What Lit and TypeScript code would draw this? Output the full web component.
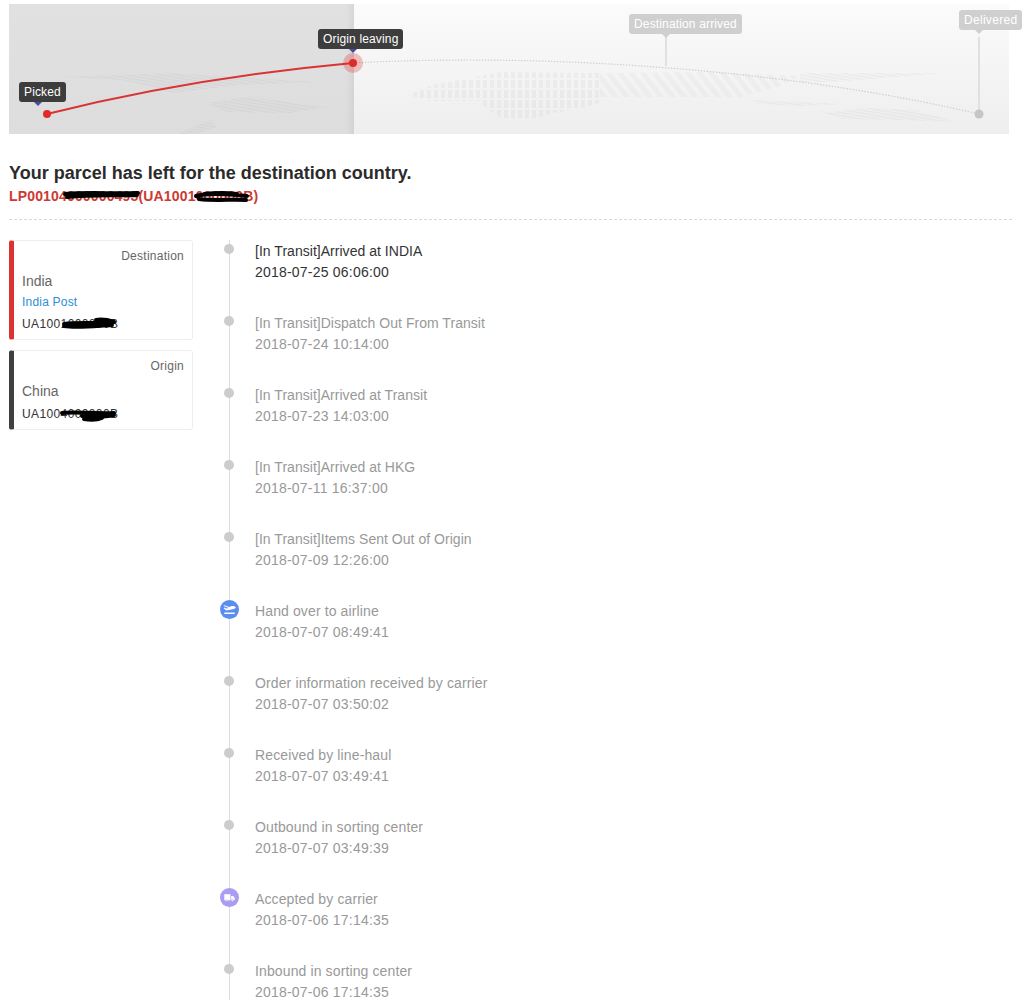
import { LitElement, html, css, svg } from "lit";
import { customElement } from "lit/decorators.js";

type Kind = "dot" | "plane" | "truck";
interface Track {
  text: string;
  time: string;
  kind?: Kind;
}

const TRACKS: Track[] = [
  { text: "[In Transit]Arrived at INDIA", time: "2018-07-25 06:06:00" },
  { text: "[In Transit]Dispatch Out From Transit", time: "2018-07-24 10:14:00" },
  { text: "[In Transit]Arrived at Transit", time: "2018-07-23 14:03:00" },
  { text: "[In Transit]Arrived at HKG", time: "2018-07-11 16:37:00" },
  { text: "[In Transit]Items Sent Out of Origin", time: "2018-07-09 12:26:00" },
  { text: "Hand over to airline", time: "2018-07-07 08:49:41", kind: "plane" },
  { text: "Order information received by carrier", time: "2018-07-07 03:50:02" },
  { text: "Received by line-haul", time: "2018-07-07 03:49:41" },
  { text: "Outbound in sorting center", time: "2018-07-07 03:49:39" },
  { text: "Accepted by carrier", time: "2018-07-06 17:14:35", kind: "truck" },
  { text: "Inbound in sorting center", time: "2018-07-06 17:14:35" },
];

// world map patches, in page coordinates (the group is shifted by the map offset)
const LAND: [string, string][] = [
  ["M60 77L173 73L317 82L240 85L173 93L123 80Z", "thin"],
  ["M207 103L247 97L327 107L290 113L227 112Z", "thin"],
  ["M180 133L210 120L217 127L197 134H180Z", "thin"],
  ["M408 95L433 85L477 77L500 72L600 73V103L573 110L553 113L533 119H503L488 110L480 101H430Z", "grid"],
  ["M600 73L720 72L800 76L780 86L740 97H683L600 97Z", "slant"],
  ["M800 73L947 73L883 78L833 82H800Z", "thin"],
  ["M823 113L867 108L913 110L957 122L900 120L843 119Z", "thin"],
  ["M745 100L800 102L843 104L800 106L760 104Z", "thin"],
];

@customElement("map-strip")
class MapStrip extends LitElement {
  static styles = css`
    :host {
      display: block;
      position: relative;
      width: 1000px;
      height: 130px;
      background: linear-gradient(#fbfbfb, #eeeeee);
    }
    svg {
      display: block;
    }
    .tag {
      position: absolute;
      height: 20px;
      line-height: 20px;
      padding: 0 5px;
      border-radius: 3px;
      font-size: 12px;
      letter-spacing: 0.15px;
      white-space: nowrap;
      color: #fff;
      background: #3d3d3d;
    }
    .tag::after {
      content: "";
      position: absolute;
      top: 100%;
      border: 4px solid transparent;
      border-bottom-width: 0;
      border-top-color: #4b4ba0;
    }
    .tag.off {
      background: #cfcfcf;
    }
    .tag.off::after {
      border-top-color: #cfcfcf;
    }
    .picked {
      left: 10px;
      top: 78px;
    }
    .picked::after {
      left: 15px;
    }
    .leaving {
      left: 309px;
      top: 25px;
    }
    .leaving::after {
      left: 31px;
    }
    .arrived {
      left: 620px;
      top: 10px;
    }
    .arrived::after {
      left: 33px;
    }
    .delivered {
      left: 950px;
      top: 6px;
      letter-spacing: 0.3px;
    }
    .delivered::after {
      left: 16px;
    }
  `;

  render() {
    return html`
      <svg width="1000" height="130" viewBox="0 0 1000 130">
        <defs>
          <pattern id="thin" width="3" height="3" patternUnits="userSpaceOnUse" patternTransform="rotate(10)">
            <rect width="3" height="1.5" fill="#000" fill-opacity="0.04"></rect>
          </pattern>
          <pattern id="slant" width="9" height="9" patternUnits="userSpaceOnUse" patternTransform="rotate(-38)">
            <rect width="5" height="9" fill="#000" fill-opacity="0.025"></rect>
          </pattern>
          <pattern id="grid" width="7" height="10" patternUnits="userSpaceOnUse">
            <rect width="4" height="8" fill="#000" fill-opacity="0.03"></rect>
          </pattern>
          <linearGradient id="done" x1="0" x2="0" y1="0" y2="1">
            <stop offset="0" stop-color="#e1e1e1"></stop>
            <stop offset="1" stop-color="#dddddd"></stop>
          </linearGradient>
          <linearGradient id="edge" x1="0" x2="1" y1="0" y2="0">
            <stop offset="0" stop-color="#000" stop-opacity="0"></stop>
            <stop offset="1" stop-color="#000" stop-opacity="0.05"></stop>
          </linearGradient>
          <filter id="soft"><feGaussianBlur stdDeviation="0.7"></feGaussianBlur></filter>
        </defs>
        <rect x="0" y="0" width="345" height="130" fill="url(#done)"></rect>
        <rect x="337" y="0" width="8" height="130" fill="url(#edge)"></rect>
        <g transform="translate(-9 -4)" filter="url(#soft)">
          ${LAND.map(([d, p]) => svg`<path d=${d} fill="url(#${p})"></path>`)}
        </g>
        <path d="M657 31V62" stroke="#e0e0e0" stroke-width="2"></path>
        <path d="M970 33V110" stroke="#e0e0e0" stroke-width="2"></path>
        <path d="M344 59C551 48 791 68 970 110" fill="none" stroke="#cfcfcf" stroke-width="1.2" stroke-dasharray="1.5 1.5"></path>
        <circle cx="970" cy="110" r="4.5" fill="#c6c6c6"></circle>
        <path d="M38 110Q181 74 344 59" fill="none" stroke="#d93434" stroke-width="2"></path>
        <circle cx="38" cy="110" r="4" fill="#e02a2a"></circle>
        <circle cx="344" cy="59" r="10" fill="#e02a2a" fill-opacity="0.28"></circle>
        <circle cx="344" cy="59" r="4" fill="#e02a2a"></circle>
      </svg>
      <div class="tag picked">Picked</div>
      <div class="tag leaving">Origin leaving</div>
      <div class="tag off arrived">Destination arrived</div>
      <div class="tag off delivered">Delivered</div>
    `;
  }
}

@customElement("app-root")
class AppRoot extends LitElement {
  static styles = css`
    :host {
      display: block;
      height: 1000px;
      overflow: hidden;
      padding: 4px 0 0 9px;
      box-sizing: border-box;
      font-family: "Liberation Sans", Arial, sans-serif;
      background: #fff;
    }
    h1 {
      margin: 28px 0 0;
      font-size: 18px;
      line-height: 22px;
      font-weight: bold;
      color: #2b2b2b;
    }
    .code {
      margin-top: 2px;
      width: fit-content;
      position: relative;
      font-size: 14px;
      line-height: 20px;
      font-weight: bold;
      letter-spacing: 0.16px;
      color: #cc3a32;
    }
    .sep {
      margin-top: 13px;
      width: 1003px;
      border-top: 1px dashed #d8d8d8;
    }
    .body {
      display: flex;
      margin-top: 20px;
    }
    .cards {
      width: 184px;
      display: flex;
      flex-direction: column;
      gap: 10px;
    }
    .card {
      box-sizing: border-box;
      padding: 7px 8px 0 8px;
      border: 1px solid #eee;
      border-left: 5px solid #3f3f3f;
      border-radius: 3px;
      height: 80px;
    }
    .card.now {
      height: 100px;
      border-left-color: #dc3232;
    }
    .label {
      text-align: right;
      font-size: 12px;
      line-height: 16px;
      letter-spacing: 0.25px;
      color: #666;
    }
    .place {
      margin-top: 7px;
      font-size: 14px;
      line-height: 20px;
      color: #666;
    }
    .carrier {
      margin-top: 3px;
      font-size: 12px;
      line-height: 16px;
      letter-spacing: 0.2px;
      color: #2a8fd6;
    }
    .num {
      margin-top: 5px;
      font-size: 12px;
      line-height: 18px;
      letter-spacing: 0.38px;
      color: #333;
      position: relative;
      width: fit-content;
    }
    .place + .num {
      margin-top: 4px;
    }
    .ink {
      position: absolute;
      left: 0;
      top: 0;
      overflow: visible;
    }
    .timeline {
      margin-left: 26px;
    }
    .row {
      display: flex;
      height: 72px;
    }
    .mark {
      position: relative;
      width: 20px;
      margin-right: 16px;
      flex: none;
    }
    .mark::before {
      content: "";
      position: absolute;
      left: 9.5px;
      top: 0;
      bottom: 0;
      width: 1px;
      background: #ddd;
    }
    .dot {
      position: absolute;
      left: 5px;
      top: 4px;
      width: 10px;
      height: 10px;
      border-radius: 50%;
      background: #ccc;
    }
    .icon {
      position: absolute;
      left: 1px;
      top: 0;
    }
    .info {
      padding-top: 1px;
      font-size: 14px;
      line-height: 21px;
      letter-spacing: 0.12px;
      color: #999;
    }
    .transit {
      letter-spacing: 0.03px;
    }
    .time {
      letter-spacing: 0.21px;
    }
    .row.latest .info {
      color: #333;
    }
  `;

  private scribble(d: string) {
    return html`<svg class="ink" width="10" height="10"><path d=${d} fill="none" stroke="#000" stroke-width="4" stroke-linecap="round"></path></svg>`;
  }

  private marker(kind?: Kind) {
    if (kind === "plane") {
      return html`<svg class="icon" width="19" height="19" viewBox="0 0 20 20">
        <circle cx="10" cy="10" r="10" fill="#5b8cf0"></circle>
        <path d="M3.5 6L5 5.4L9.6 7.4L12.5 6.4C14 6 16.4 6.8 16.6 8C16.6 8.9 15 9.5 13.5 9.8L6.5 11L3.6 8.3L5 7.8L6.6 8.9L9.2 8.3Z" fill="#fff"></path>
        <rect x="4.5" y="13.2" width="11" height="1.5" fill="#fff"></rect>
      </svg>`;
    }
    if (kind === "truck") {
      return html`<svg class="icon" width="19" height="19" viewBox="0 0 20 20">
        <circle cx="10" cy="10" r="10" fill="#a99cf2"></circle>
        <path d="M4.5 6.5H11V13H4.5Z" fill="#fff"></path>
        <path d="M11.7 8.5H14L15.5 10.4V13H11.7Z" fill="#fff"></path>
        <circle cx="7" cy="13.2" r="1" fill="#fff" stroke="#a99cf2" stroke-width="0.6"></circle>
        <circle cx="13" cy="13.2" r="1" fill="#fff" stroke="#a99cf2" stroke-width="0.6"></circle>
      </svg>`;
    }
    return html`<span class="dot"></span>`;
  }

  render() {
    return html`
      <map-strip></map-strip>
      <h1>Your parcel has left for the destination country.</h1>
      <div class="code">
        LP00104000000495(UA1001000000B)
        ${this.scribble("M56 8C78 6 105 8 129 7M58 11C85 8 110 10 128 9")}
        ${this.scribble("M187 10C200 7 215 8 238 10M190 13C205 15 225 13 237 14M195 8C205 7 220 7 228 8")}
      </div>
      <div class="sep"></div>
      <div class="body">
        <div class="cards">
          <div class="card now">
            <div class="label">Destination</div>
            <div class="place">India</div>
            <div class="carrier">India Post</div>
            <div class="num">
              UA1001000000B
              ${this.scribble("M42 9C55 7 72 9 90 7M42 11C55 13 72 11 90 10M74 5C80 4 86 5 92 7")}
            </div>
          </div>
          <div class="card">
            <div class="label">Origin</div>
            <div class="place">China</div>
            <div class="num">
              UA1004000000B
              ${this.scribble("M40 8C52 6 70 9 92 8M60 11C70 13 80 12 92 10M62 14C68 15 75 15 80 13")}
            </div>
          </div>
        </div>
        <div class="timeline">
          ${TRACKS.map(
            (t, i) => html`
              <div class="row ${i === 0 ? "latest" : ""}">
                <div class="mark">${this.marker(t.kind)}</div>
                <div class="info">
                  <div class=${t.text.startsWith("[") ? "transit" : ""}>${t.text}</div>
                  <div class="time">${t.time}</div>
                </div>
              </div>
            `
          )}
        </div>
      </div>
    `;
  }
}
